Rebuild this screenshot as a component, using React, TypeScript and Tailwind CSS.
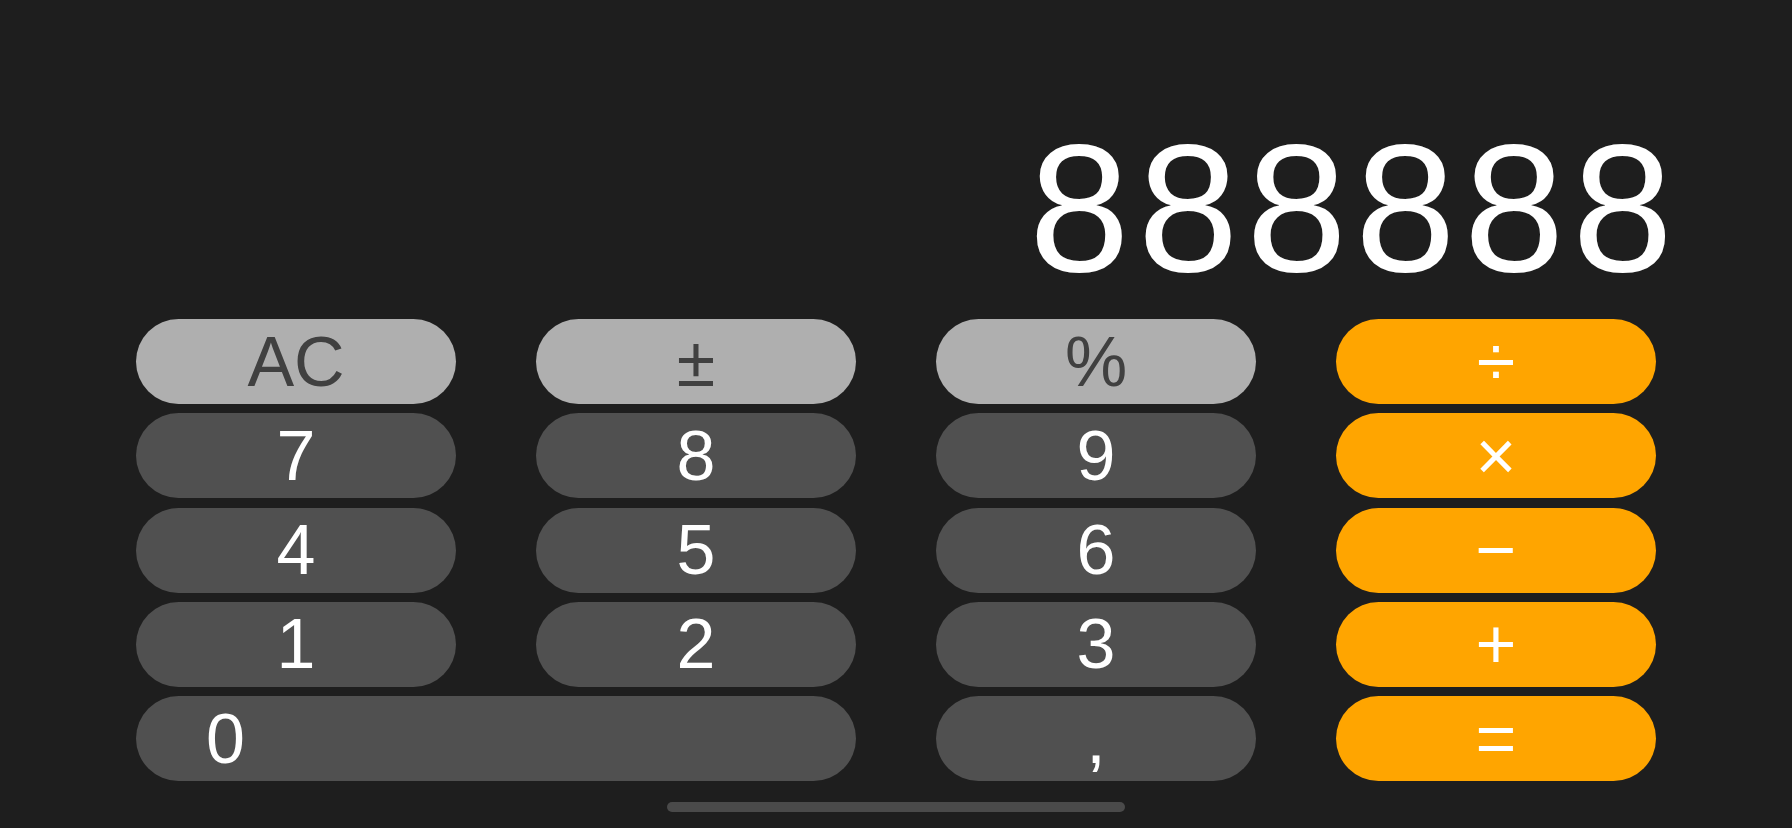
import React from 'react';

type Key = {
  label: string;
  kind: 'fn' | 'num' | 'op';
  wide?: boolean;
};

const keys: Key[] = [
  { label: 'AC', kind: 'fn' },
  { label: '±', kind: 'fn' },
  { label: '%', kind: 'fn' },
  { label: '÷', kind: 'op' },
  { label: '7', kind: 'num' },
  { label: '8', kind: 'num' },
  { label: '9', kind: 'num' },
  { label: '×', kind: 'op' },
  { label: '4', kind: 'num' },
  { label: '5', kind: 'num' },
  { label: '6', kind: 'num' },
  { label: '−', kind: 'op' },
  { label: '1', kind: 'num' },
  { label: '2', kind: 'num' },
  { label: '3', kind: 'num' },
  { label: '+', kind: 'op' },
  { label: '0', kind: 'num', wide: true },
  { label: ',', kind: 'num' },
  { label: '=', kind: 'op' },
];

const kindClass = {
  fn: 'bg-[#afafaf] text-[#404040]',
  num: 'bg-[#505050] text-white',
  op: 'bg-[#ffa500] text-white',
};

function CalcKey({ k }: { k: Key }) {
  return (
    <button
      className={`h-[85px] rounded-full flex items-center leading-none text-[70px] ${kindClass[k.kind]} ${
        k.wide ? 'col-span-2 justify-start pl-[70px]' : 'justify-center'
      }`}
    >
      {k.label}
    </button>
  );
}

export default function App() {
  return (
    <div
      className="w-full h-[828px] bg-[#1e1e1e] flex flex-col items-center overflow-hidden"
      style={{ fontFamily: '"Liberation Sans", Arial, sans-serif' }}
    >
      {/* Display */}
      <div className="w-[1520px] pt-[118px] flex justify-end">
        <div className="h-[181px] text-[181px] leading-none text-white tracking-[8px] -mr-[25px]">
          888888
        </div>
      </div>

      {/* Keypad */}
      <div className="mt-[20px] w-[1520px] grid grid-cols-4 gap-x-[80px] gap-y-[9.25px]">
        {keys.map((k) => (
          <CalcKey key={k.label} k={k} />
        ))}
      </div>

      {/* Home indicator */}
      <div className="mt-[21px] w-[458px] h-[10px] rounded-full bg-[#4a4a4a]" />
    </div>
  );
}
